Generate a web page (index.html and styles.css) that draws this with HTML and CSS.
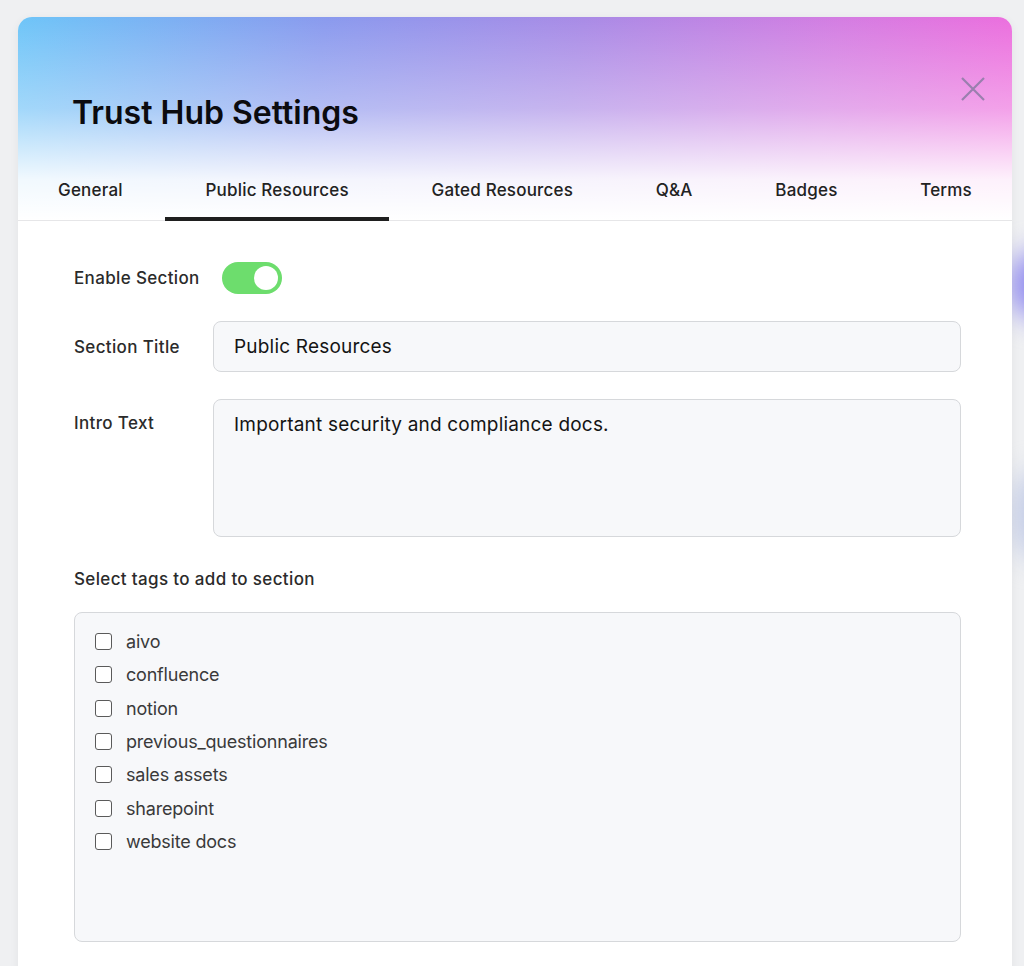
FILE: index.html
```html
<!DOCTYPE html>
<html lang="en">
<head>
    <meta charset="UTF-8">
    <meta name="viewport" content="width=device-width, initial-scale=1.0">
    <title>Trust Hub Settings</title>
    <link rel="stylesheet" href="styles.css">
</head>
<body>
    <div class="blob blob-purple"></div>
    <div class="blob blob-blue"></div>

    <div class="modal">
        <div class="modal-head">
            <h1 class="title">Trust Hub Settings</h1>
            <button class="close" aria-label="Close">
                <svg width="24" height="24" viewBox="0 0 24 24"><path d="M1 1 L23 23 M23 1 L1 23" stroke="currentColor" stroke-width="2.2" fill="none"/></svg>
            </button>
            <ul class="tabs">
                <li>General</li>
                <li class="on">Public Resources</li>
                <li>Gated Resources</li>
                <li>Q&amp;A</li>
                <li>Badges</li>
                <li>Terms</li>
            </ul>
        </div>

        <div class="modal-body">
            <div class="row">
                <label class="label">Enable Section</label>
                <span class="toggle on"><span class="knob"></span></span>
            </div>
            <div class="row">
                <label class="label">Section Title</label>
                <div class="input">Public Resources</div>
            </div>
            <div class="row top">
                <label class="label">Intro Text</label>
                <div class="input area">Important security and compliance docs.</div>
            </div>

            <p class="label tags-title">Select tags to add to section</p>
            <ul class="tags">
                <li><span class="check"></span>aivo</li>
                <li><span class="check"></span>confluence</li>
                <li><span class="check"></span>notion</li>
                <li><span class="check"></span>previous_questionnaires</li>
                <li><span class="check"></span>sales assets</li>
                <li><span class="check"></span>sharepoint</li>
                <li><span class="check"></span>website docs</li>
            </ul>
        </div>
    </div>
</body>
</html>
```

FILE: styles.css
```css
* { margin:0; padding:0; box-sizing:border-box;}
ul,ol,li { list-style:none;}

body { background:#eff0f2; font-family:"Inter", "Lato", sans-serif; color:#222; overflow:hidden; padding:17px 12px 0 18px; height:966px; position:relative;}

.blob { position:absolute; border-radius:50%; filter:blur(14px);}
.blob-purple { width:60px; height:70px; left:1010px; top:250px; background:#8d87f0;}
.blob-blue { width:50px; height:90px; left:1012px; top:470px; background:#c2cbe6;}

.modal { position:relative; background:#fff; border-radius:14px; overflow:hidden; height:1000px; box-shadow:0 2px 10px rgba(0,0,0,0.06);}

.modal-head { position:relative; padding-top:78px;
    background:
        linear-gradient(to bottom, rgba(255,255,255,0) 0%, rgba(255,255,255,0.35) 45%, rgba(255,255,255,0.9) 80%, #fff 100%),
        linear-gradient(100deg, #6ec5f8 0%, #8a9aee 30%, #a98be6 55%, #d47de2 80%, #f06cdd 100%);
    border-bottom:1px solid #e6e6e8;}

.title { font-size:32px; font-weight:600; letter-spacing:0; color:#0b0b0f; padding-left:54px; line-height:36px;}

.close { position:absolute; right:27px; top:60px; background:none; border:none; color:#9a7fae; width:24px; height:24px; cursor:pointer;}
.close svg { display:block;}

.tabs { display:flex; justify-content:space-between; margin-top:42px;}
.tabs li { padding:0 40px; font-size:17px; font-weight:500; color:#222; letter-spacing:0.2px; height:48px; line-height:34px; border-bottom:4px solid transparent; margin-bottom:-1px;}
.tabs li.on { border-bottom-color:#1f1f1f;}

.modal-body { padding:41px 51px 0 56px;}

.row { display:flex; align-items:center; margin-bottom:27px;}
.row.top { align-items:flex-start;}
.label { width:139px; flex-shrink:0; font-size:17px; font-weight:500; color:#2b2b2b; letter-spacing:0.35px;}
.row.top .label { padding-top:14px;}

.toggle { display:inline-flex; align-items:center; justify-content:flex-end; width:60px; height:32px; border-radius:16px; background:#6ddd6d; padding:4px; margin-left:9px;}
.toggle .knob { width:24px; height:24px; border-radius:50%; background:#fff;}

.input { flex:1; height:51px; border:1px solid #d6d8db; border-radius:8px; background:#f7f8fa; padding:0 20px; font-size:19px; color:#141414; line-height:49px; letter-spacing:0.2px;}
.input.area { height:138px; line-height:26px; padding-top:12px;}

.tags-title { width:auto; margin-top:32px; margin-bottom:23px;}

.tags { height:330px; border:1px solid #d6d8db; border-radius:8px; background:#f7f8fa; padding:12px 20px;}
.tags li { display:flex; align-items:center; height:33.3px; font-size:18px; color:#3a3a3a; letter-spacing:-0.2px;}
.check { width:17px; height:17px; border:1.5px solid #5a5a5a; border-radius:3px; background:#fff; margin-right:14px;}
```
